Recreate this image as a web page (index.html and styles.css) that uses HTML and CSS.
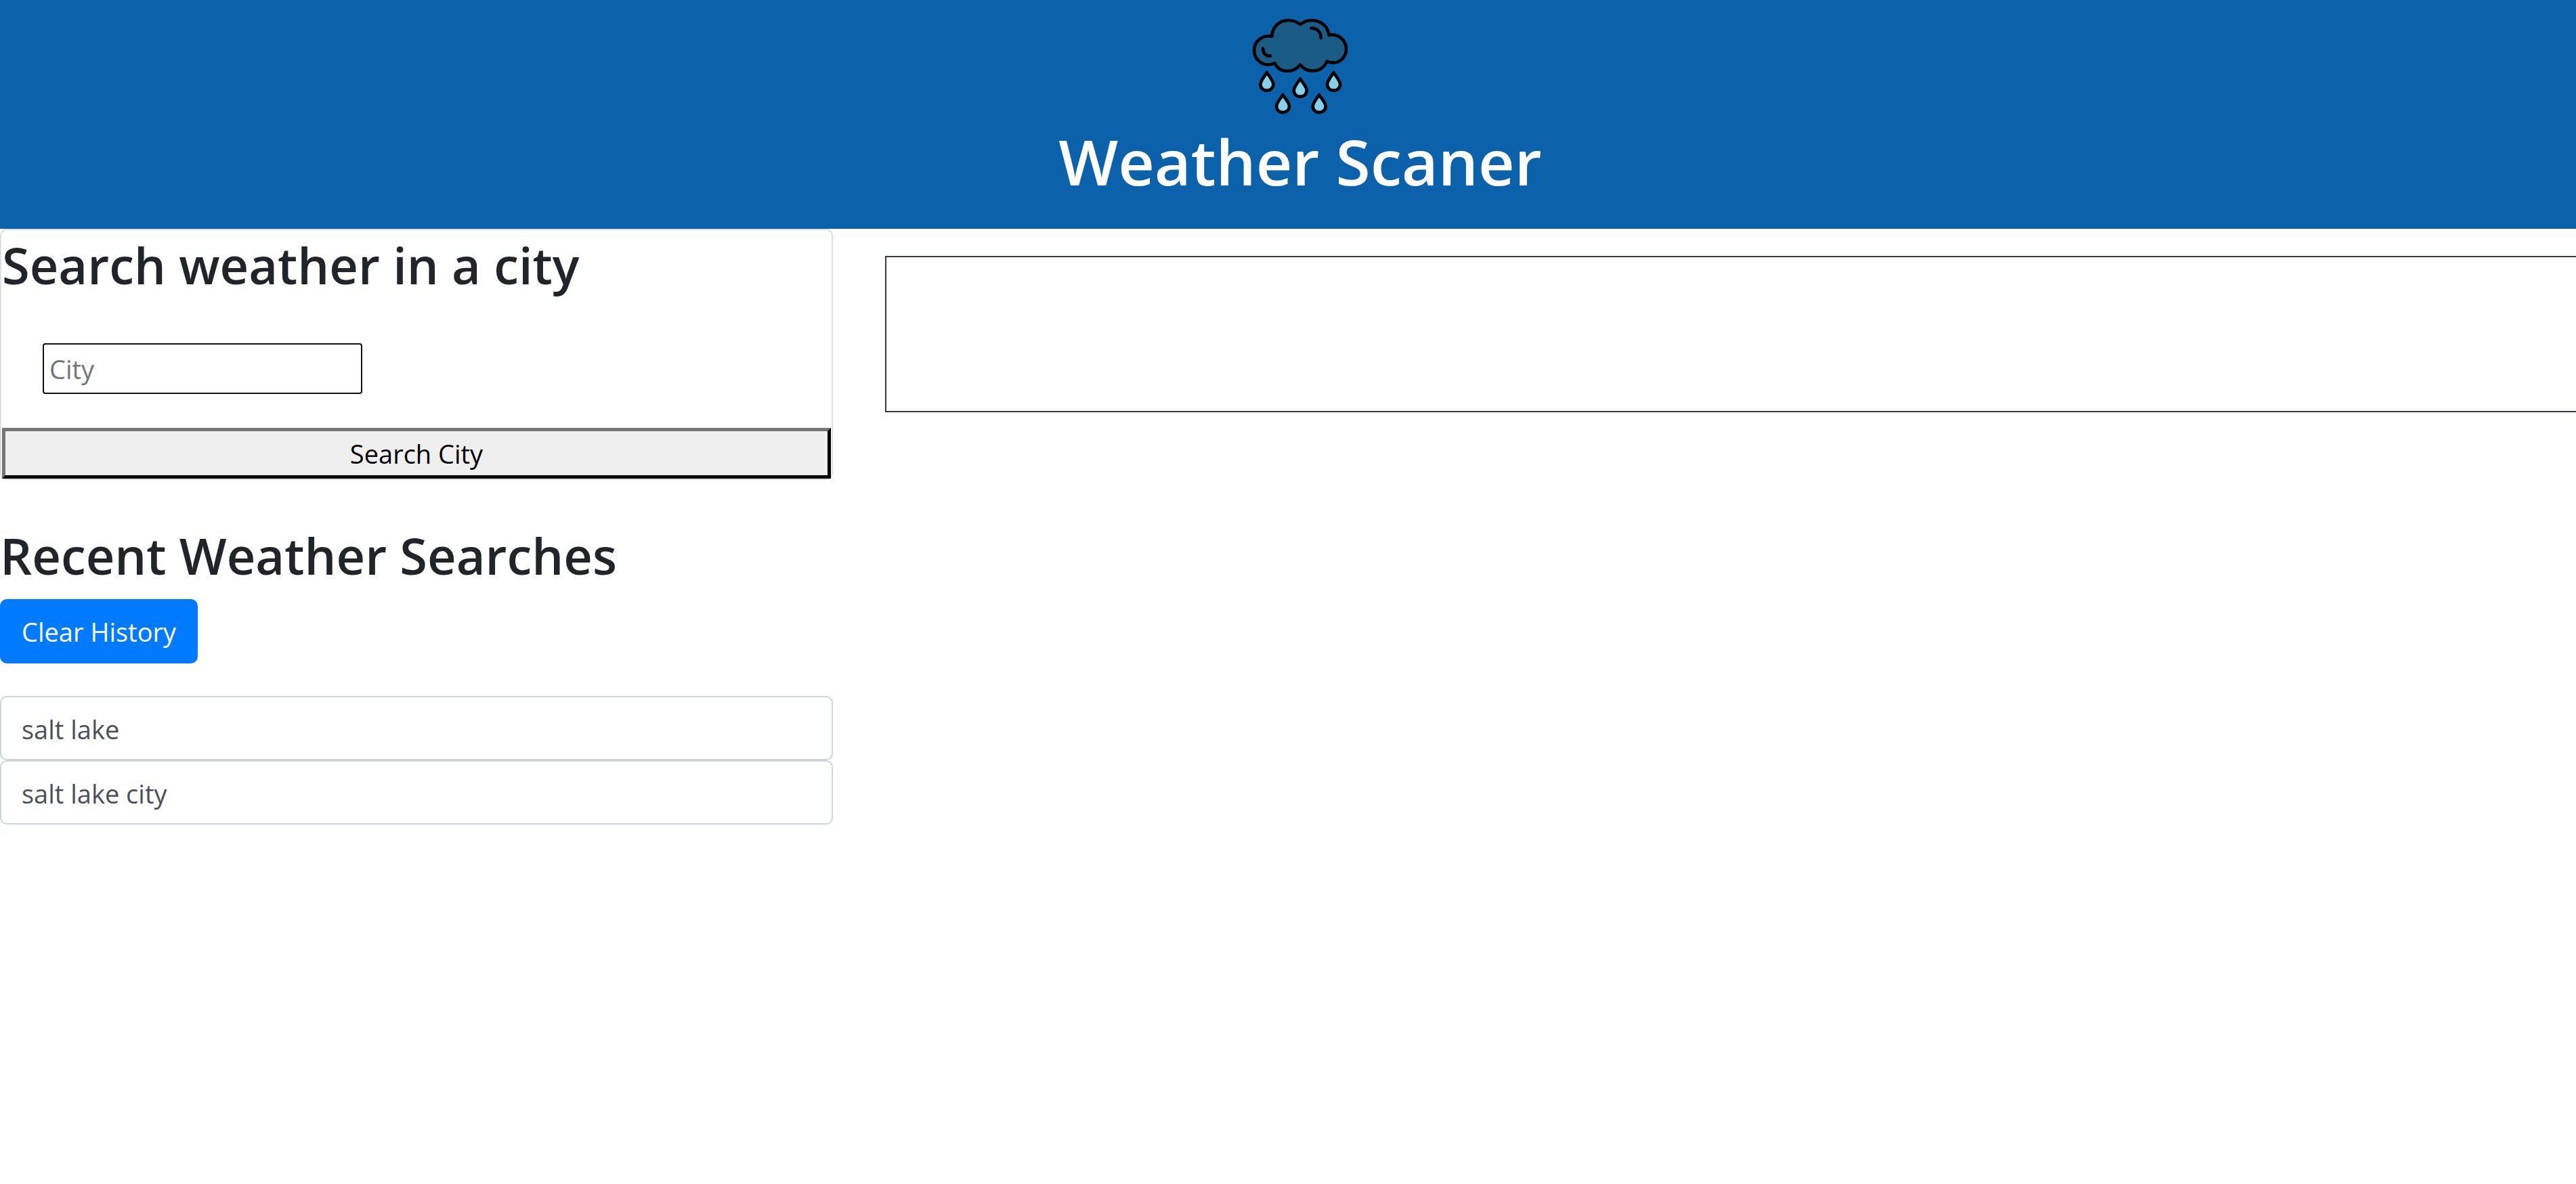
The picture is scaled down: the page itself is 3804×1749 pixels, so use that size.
FILE: index.html
```html
<!DOCTYPE html>
<html lang="en">
<head>
  <meta charset="utf-8">
  <meta name="viewport" content="width=device-width, initial-scale=1">
  <title>Weather Scaner</title>
  <link rel="stylesheet" href="styles.css">
</head>
<body>
  <header class="site-header">
    <svg class="logo" viewBox="0 0 540 510" fill="none" stroke="#000" stroke-width="14" stroke-linecap="round" stroke-linejoin="round" aria-hidden="true">
      <path fill="#1a5c86" d="M145 131C145 90 178 60 217 60C238 60 255 66 270 78C286 66 302 60 322 60C362 60 394 88 397 125C440 119 474 148 474 187C474 231 433 261 389 242C376 269 354 284 325 284C302 284 284 274 270 257C256 274 236 285 213 285C188 285 168 273 157 250C110 270 66 239 66 193C66 153 102 124 145 131Z"/>
      <path d="M318 95C345 94 363 113 362 138M105 185C104 205 118 219 138 218"/>
      <g fill="#87cee9">
        <path d="M122 291C115 304 94 327 94 344C94 360 107 371 122 371C138 371 151 360 151 344C151 327 129 304 122 291Z"/>
        <path d="M270 319C263 332 242 355 242 371C242 387 254 398 270 398C286 398 299 387 299 371C299 355 277 332 270 319Z"/>
        <path d="M418 291C411 304 390 327 390 344C390 360 402 371 418 371C434 371 447 360 447 344C447 327 425 304 418 291Z"/>
        <path d="M193 390C186 403 165 425 165 441C165 457 177 468 193 468C209 468 222 457 222 441C222 425 200 403 193 390Z"/>
        <path d="M354 390C347 403 326 425 326 441C326 457 338 468 354 468C370 468 383 457 383 441C383 425 361 403 354 390Z"/>
      </g>
    </svg>
    <h1 class="site-title">Weather Scaner</h1>
  </header>
  <main class="layout">
    <aside class="sidebar">
      <form class="search-card">
        <h2 class="heading"><label for="city">Search weather in a city</label></h2>
        <input class="city-input" id="city" type="text" placeholder="City">
        <button class="search-button" type="button">Search City</button>
      </form>
      <section class="history">
        <h2 class="heading">Recent Weather Searches</h2>
        <button class="clear-button" type="button">Clear History</button>
        <div class="history-list">
          <input class="history-item" type="text" value="salt lake" aria-label="Recent search 1" readonly>
          <input class="history-item" type="text" value="salt lake city" aria-label="Recent search 2" readonly>
        </div>
      </section>
    </aside>
    <section class="results" aria-label="Current weather">
      <div class="current-weather"></div>
    </section>
  </main>
</body>
</html>
```
FILE: styles.css
```css
* {
  box-sizing: border-box;
}

body {
  margin: 0;
  background: #fff;
  color: #212529;
  font-family: "Open Sans", "Noto Sans", sans-serif;
  font-size: 38px;
  line-height: 60px;
  overflow-x: hidden;
}

button,
input {
  margin: 0;
  font: inherit;
}

.site-header {
  display: flex;
  flex-direction: column;
  align-items: center;
  padding: 10px 0 42px 36px;
  background: #0b62aa;
  color: #fff;
}

.logo {
  width: 180px;
  height: 170px;
}

.site-title {
  margin: 0;
  font-size: 93px;
  font-weight: 600;
  line-height: 116px;
}

.layout {
  display: grid;
  grid-template-columns: 205fr 429fr;
  align-items: start;
}

.heading {
  margin: 0;
  font-size: 74px;
  font-weight: 600;
  line-height: 104px;
}

.search-card {
  display: flex;
  flex-direction: column;
  align-items: flex-start;
  padding: 0 1px;
  border: 2px solid #dfdfdf;
  border-radius: 10px;
}

.city-input {
  width: 472px;
  height: 75px;
  margin: 63px 0 50px 60px;
  padding: 2px 8px;
  border: 2px solid #111;
  border-radius: 4px;
  background: #fff;
}

.city-input::placeholder {
  color: #757575;
}

.search-button {
  width: 100%;
  height: 75px;
  padding: 0;
  border: 5px outset #767676;
  border-color: #767676 #212121 #212121 #767676;
  background: #efefef;
  color: #000;
}

.history {
  padding-top: 60px;
}

.clear-button {
  display: block;
  height: 95px;
  margin-top: 12px;
  padding: 0 32px;
  border: 0;
  border-radius: 10px;
  background: #007bff;
  color: #fff;
}

.history-list {
  display: flex;
  flex-direction: column;
  margin-top: 48px;
}

.history-item {
  width: 100%;
  height: 95px;
  padding: 2px 30px 0;
  border: 2px solid #ced4da;
  border-radius: 10px;
  background: #fff;
  color: #495057;
}

.results {
  padding: 40px 0 0 77px;
}

.current-weather {
  min-height: 231px;
  border: 2px solid #343a40;
  border-right: 0;
}
```
